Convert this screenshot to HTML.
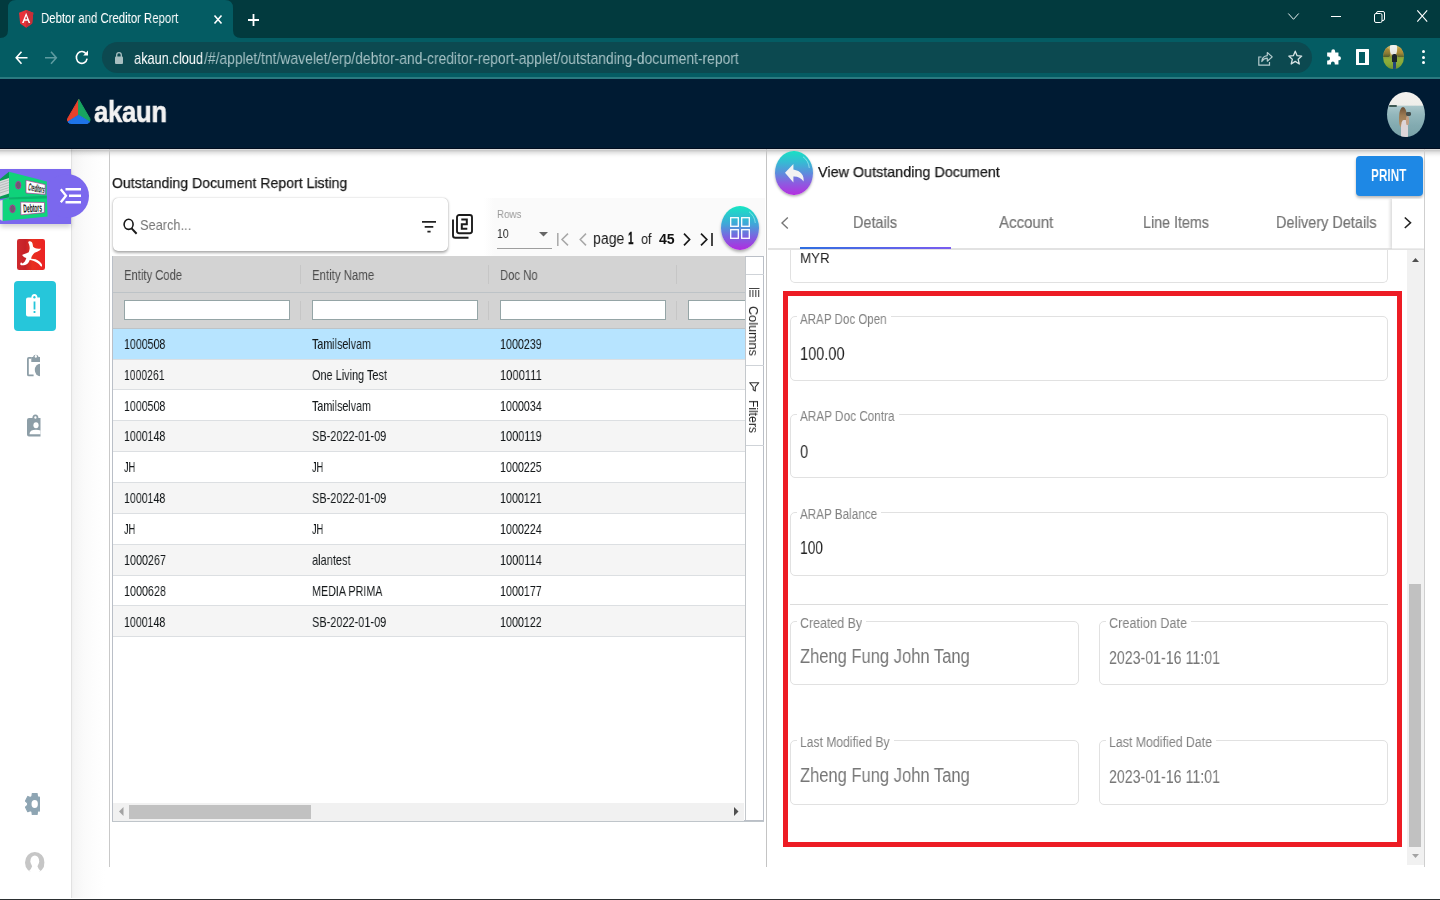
<!DOCTYPE html>
<html lang="en"><head><meta charset="utf-8"><title>Debtor and Creditor Report</title><style>
*{margin:0;padding:0;box-sizing:border-box}
html,body{width:1440px;height:900px;overflow:hidden;background:#fff}
body{position:relative;font-family:"Liberation Sans",sans-serif;}
.t{position:absolute;white-space:nowrap;line-height:1;transform-origin:0 0;display:block;will-change:transform}
.b{position:absolute;display:block}
svg{position:absolute;overflow:visible}
</style></head>
<body>
<div class="b" style="left:0px;top:0px;width:1440.00px;height:38.00px;background:#023a3e"></div>
<div class="b" style="left:0px;top:38px;width:1440.00px;height:40.00px;background:#045c63"></div>
<div class="b" style="left:0px;top:77px;width:1440.00px;height:1.50px;background:#2a7a80"></div>
<svg style="left:0;top:0" width="250" height="38"><path d="M0 38 Q8 38 8 30 L8 8 Q8 0 16 0 L225 0 Q233 0 233 8 L233 30 Q233 38 241 38 Z" fill="#045c63"/></svg>
<svg style="left:19px;top:9.7px" width="14.3" height="17.7" viewBox="0 0 15 19" preserveAspectRatio="none"><path d="M7.5 0 L15 3 L13.8 14.5 L7.5 19 L1.2 14.5 L0 3 Z" fill="#e8323a"/><path d="M7.5 0 L15 3 L13.8 14.5 L7.5 19 Z" fill="#c62f38"/><path d="M7.5 3 L3.2 14 L4.9 14 L5.8 11.5 L9.2 11.5 L10.1 14 L11.8 14 Z M7.5 6.5 L8.7 10 L6.3 10 Z" fill="#fff" fill-rule="evenodd"/></svg>
<span class="t" style="left:40.60px;top:11.30px;font-size:14.97px;color:#fff;transform:scaleX(0.7599);">Debtor and Creditor Report</span>
<svg style="left:214px;top:14.5px" width="8" height="9" viewBox="0 0 8 9"><path d="M0.5 0.5 L7.5 8.5 M7.5 0.5 L0.5 8.5" stroke="#fff" stroke-width="1.6" fill="none"/></svg>
<svg style="left:248px;top:13.5px" width="11" height="12" viewBox="0 0 11 12"><path d="M5.5 0 V12 M0 6 H11" stroke="#fff" stroke-width="1.8" fill="none"/></svg>
<svg style="left:1288px;top:13px" width="11" height="7" viewBox="0 0 11 7"><path d="M0.3 0.5 L5.5 6.3 L10.7 0.5" stroke="#e8f0f0" stroke-width="1" fill="none"/></svg>
<div class="b" style="left:1331px;top:16px;width:10.00px;height:1.20px;background:#fff"></div>
<svg style="left:1373.5px;top:10.5px" width="11" height="12" viewBox="0 0 11 12"><rect x="0.5" y="2.5" width="7.5" height="9" rx="1.5" stroke="#fff" stroke-width="1" fill="none"/><path d="M2.5 2.5 V2 Q2.5 0.5 4 0.5 H9 Q10.5 0.5 10.5 2 V8 Q10.5 9.5 9 9.5 H8" stroke="#fff" stroke-width="1" fill="none"/></svg>
<svg style="left:1417px;top:10.3px" width="10.5" height="12" viewBox="0 0 10.5 12"><path d="M0.3 0.3 L10.2 11.7 M10.2 0.3 L0.3 11.7" stroke="#fff" stroke-width="1.1" fill="none"/></svg>
<svg style="left:14.5px;top:50.5px" width="12.5" height="13.5" viewBox="0 0 12.5 13.5"><path d="M12.5 6.75 H1.5 M6.5 0.8 L1.2 6.75 L6.5 12.7" stroke="#fff" stroke-width="1.6" fill="none"/></svg>
<svg style="left:44.5px;top:50.5px" width="12.5" height="13.5" viewBox="0 0 12.5 13.5"><path d="M0 6.75 H11 M6 0.8 L11.3 6.75 L6 12.7" stroke="#5e9ba0" stroke-width="1.6" fill="none"/></svg>
<svg style="left:74.5px;top:50px" width="13.5" height="14.5" viewBox="0 0 13.5 14.5"><path d="M11.3 4.2 A5.4 5.9 0 1 0 12.1 8.6" stroke="#fff" stroke-width="1.6" fill="none"/><path d="M13 0.6 V5.6 H8.2 Z" fill="#fff"/></svg>
<div class="b" style="left:102px;top:42px;width:1210.00px;height:31.00px;background:#0c4950;border-radius:15.5px"></div>
<svg style="left:114.5px;top:52px" width="8" height="12" viewBox="0 0 8 12"><rect x="0" y="4.6" width="8" height="7.4" rx="1" fill="#a9bfc1"/><path d="M1.7 5 V3 A2.3 2.4 0 0 1 6.3 3 V5" stroke="#a9bfc1" stroke-width="1.3" fill="none"/></svg>
<span class="t" style="left:133.80px;top:49.80px;font-size:16.20px;color:#fff;transform:scaleX(0.7918);">akaun.cloud</span>
<span class="t" style="left:203.60px;top:49.80px;font-size:16.20px;color:#a5c1c4;transform:scaleX(0.8575);">/#/applet/tnt/wavelet/erp/debtor-and-creditor-report-applet/outstanding-document-report</span>
<svg style="left:1258px;top:50.5px" width="15" height="15" viewBox="0 0 15 15"><path d="M3.5 6 H0.8 V14.2 H11.5 V11" stroke="#b5cbcd" stroke-width="1.2" fill="none"/><path d="M3.8 10.5 Q4.2 5.2 9.3 4.6 V1.5 L14.2 5.9 L9.3 10.2 V7.2 Q5.8 7.2 3.8 10.5 Z" stroke="#b5cbcd" stroke-width="1.2" fill="none" stroke-linejoin="round"/></svg>
<svg style="left:1288px;top:50px" width="14.5" height="15" viewBox="0 0 14.5 15"><path d="M7.25 1.2 L9.1 5.7 L13.7 6.1 L10.2 9.3 L11.3 14 L7.25 11.4 L3.2 14 L4.3 9.3 L0.8 6.1 L5.4 5.7 Z" stroke="#d7e4e5" stroke-width="1.3" fill="none" stroke-linejoin="round"/></svg>
<svg style="left:1325.6px;top:49.2px" width="14.8" height="16" viewBox="0 0 14.5 16"><path d="M5.2 2.3 A1.9 2 0 0 1 9 2.3 V3.6 H12.3 V7.3 H13 A1.8 2 0 0 1 13 11.3 H12.3 V15.6 H8.6 V14.6 A1.9 2 0 0 0 4.8 14.6 V15.6 H1 V11.6 H2 A1.9 2 0 0 0 2 7.6 H1 V3.6 H5.2 Z" fill="#fff"/></svg>
<div class="b" style="left:1356.2px;top:49.4px;width:13.20px;height:15.60px;background:#fff;border-radius:0.5px"></div>
<div class="b" style="left:1358.5px;top:52px;width:6.40px;height:10.60px;background:#045c63"></div>
<div class="b" style="left:1383px;top:44.8px;width:20.5px;height:24.5px;border-radius:50%;overflow:hidden;background:linear-gradient(180deg,#c9b56a 0%,#b9a052 40%,#8a9a3c 49%,#8fae3c 60%,#86a838 80%,#6f9230 100%)"><div class="b" style="left:6.5px;top:0;width:7.5px;height:10.5px;background:linear-gradient(180deg,#f4f4f2,#e6e6e0);border-radius:0 0 45% 45%"></div><div class="b" style="left:0;top:3px;width:7px;height:9px;background:linear-gradient(180deg,#b08f3a,#8c7a34 60%,#4f5a2c);border-radius:30% 50% 20% 0"></div><div class="b" style="left:13.5px;top:2.5px;width:7px;height:9.5px;background:linear-gradient(180deg,#c89c3c,#a88a38 60%,#5a6430);border-radius:50% 30% 0 20%"></div><div class="b" style="left:9.2px;top:9.2px;width:4.7px;height:8.2px;background:#1b232d;border-radius:2px 2px 0.5px 0.5px"></div><div class="b" style="left:9.9px;top:17px;width:3.3px;height:7.5px;background:#21457a"></div></div>
<div class="b" style="left:1421.5px;top:50.1px;width:3.20px;height:3.20px;background:#fff;border-radius:50%"></div>
<div class="b" style="left:1421.5px;top:55.699999999999996px;width:3.20px;height:3.20px;background:#fff;border-radius:50%"></div>
<div class="b" style="left:1421.5px;top:61.199999999999996px;width:3.20px;height:3.20px;background:#fff;border-radius:50%"></div>
<div class="b" style="left:0px;top:78.5px;width:1440.00px;height:70.10px;background:#001b33"></div>
<div class="b" style="left:0px;top:147.7px;width:1440.00px;height:0.90px;background:#000d1f"></div>
<svg style="left:67px;top:99px" width="23.5" height="25" viewBox="0 0 23.5 25"><path d="M11.75 0.5 L0.7 19.5 Q0 21 1 22.5 L11.5 16.2 Z" fill="#e8412b" stroke="#e8412b" stroke-width="1" stroke-linejoin="round"/><path d="M11.75 0.5 L22.8 19.5 Q23.5 21 22.5 22.5 L11.5 16.2 Z" fill="#18a560" stroke="#18a560" stroke-width="1" stroke-linejoin="round"/><path d="M11.5 16.2 L1 22.8 Q2 24.5 3.5 24.5 H20 Q21.5 24.5 22.5 22.8 Z" fill="#1e74e8" stroke="#1e74e8" stroke-width="1" stroke-linejoin="round"/></svg>
<span class="t" style="left:94.30px;top:97.30px;font-size:29.34px;color:#f2f2f2;font-weight:700;transform:scaleX(0.8739);letter-spacing:-0.3px;-webkit-text-stroke:0.6px #f2f2f2;">akaun</span>
<div class="b" style="left:1387.3px;top:92px;width:38px;height:45.3px;border-radius:50%;overflow:hidden;background:linear-gradient(180deg,#f3f2ef 0%,#efeeea 29%,#a9c6ca 32%,#93b7bc 50%,#82aab0 75%,#7aa2a8 100%)"><div class="b" style="left:1.5px;top:13.2px;width:8.5px;height:1.7px;background:#3f5a55;border-radius:1px"></div><div class="b" style="left:11.4px;top:14.7px;width:8px;height:21px;background:linear-gradient(180deg,#6b4f35,#9c7a52 40%,#b8956b);border-radius:50% 50% 35% 35%"></div><div class="b" style="left:13.9px;top:27.5px;width:6.4px;height:19px;background:#ddd5d8;border-radius:40% 40% 10% 10%"></div><div class="b" style="left:18.6px;top:19.6px;width:5px;height:4.6px;background:#46504e;border-radius:30%"></div><div class="b" style="left:18.4px;top:23.6px;width:3.2px;height:9px;background:#c4a085;border-radius:40%"></div></div>
<div class="b" style="left:71px;top:148.6px;width:38.00px;height:749.40px;background:linear-gradient(90deg,#efefef 0,#f5f5f5 3px,#fafafa 12px,#fdfdfd 22px,#fff 34px)"></div>
<div class="b" style="left:0px;top:148.6px;width:71.30px;height:749.40px;background:#fff"></div>
<div class="b" style="left:71.3px;top:148.6px;width:0.90px;height:749.40px;background:#e2e2e2"></div>
<div class="b" style="left:0px;top:148.6px;width:1440.00px;height:9.40px;background:linear-gradient(180deg,rgba(0,0,0,.06) 0,rgba(0,0,0,.23) 12%,rgba(0,0,0,.1) 40%,rgba(0,0,0,.02) 75%,rgba(0,0,0,0))"></div>
<div class="b" style="left:0px;top:169.2px;width:71.00px;height:54.50px;background:#7b68ee;box-shadow:0 3px 5px rgba(0,0,0,.18)"></div>
<div class="b" style="left:45px;top:174px;width:44.00px;height:44.00px;background:#7b68ee;border-radius:22px"></div>
<svg style="left:0;top:165px" width="96" height="63" viewBox="0 165 96 63"><path d="M9 171.7 L0 179 V199 L9 197.6 Z" fill="#079a55"/><path d="M0 181 L9 178 V193.5 L0 196.5 Z" fill="#d9dcdc"/><path d="M0 183 L9 180 M0 185.5 L9 182.5 M0 188 L9 185 M0 190.5 L9 187.5 M0 193 L9 190" stroke="#a9adad" stroke-width="0.7"/><path d="M9 171.7 L46.9 181.5 L46.6 195.8 L9 197.6 Z" fill="#0fd27a"/><path d="M2.5 200 L9 197.4 L46.9 195.6 L47.6 216.5 L2.5 221 Z" fill="#10d57c"/><path d="M9 197.6 L46.7 195.8 L46.8 198.5 L9 199.5 Z" fill="#0ab568"/><path d="M0 200.5 L2.5 200 V221 L0 219.5 Z" fill="#e3e3e3"/><path d="M26 180.3 L45.2 184.6 V194.4 L26 193 Z" fill="#fff" stroke="#a63a93" stroke-width="0.7" stroke-linejoin="round"/><path d="M20.7 202.1 L44.5 202.5 L44.3 212.6 L20.9 214.9 Z" fill="#fff" stroke="#a63a93" stroke-width="0.7" stroke-linejoin="round"/><ellipse cx="18.3" cy="185.2" rx="2.6" ry="3.8" fill="#6d5a70" stroke="#b1389c" stroke-width="0.9"/><ellipse cx="12.5" cy="208.8" rx="2.7" ry="3.9" fill="#6d5a70" stroke="#b1389c" stroke-width="0.9"/><text font-family="Liberation Sans, sans-serif" font-size="10.5" font-weight="700" fill="#111" transform="translate(27.8 190.2) rotate(11.5) scale(0.355 1)">Creditors</text><text font-family="Liberation Sans, sans-serif" font-size="11.5" font-weight="700" fill="#111" transform="translate(23.6 212.6) rotate(-3.5) scale(0.43 1)">Debtors</text></svg>
<svg style="left:0;top:165px" width="96" height="63" viewBox="0 165 96 63"><path d="M60.8 189.2 L66 195.7 L60.8 202.2" stroke="#fff" stroke-width="2.3" fill="none"/><path d="M65.5 189.3 H81 M69 195.7 H81 M65.5 202.2 H81" stroke="#fff" stroke-width="2.4" fill="none"/></svg>
<svg style="left:16.8px;top:238.8px" width="28" height="31" viewBox="0 0 28 31"><defs><linearGradient id="rg" x1="0" x2="1"><stop offset="0" stop-color="#cf2a2e"/><stop offset="0.3" stop-color="#c62127"/><stop offset="0.55" stop-color="#e8301f"/><stop offset="1" stop-color="#ec2224"/></linearGradient></defs><rect width="28" height="31" rx="2.2" fill="url(#rg)"/><path d="M12 2.2 Q13.2 2 13.9 2.5 Q15.2 3.2 15.5 4.6 Q15.8 6.2 16.1 7.8 Q17.8 9.2 19.6 9.5 Q21.8 9.8 24 9.4 Q23.5 10.8 22.5 11.5 Q20.3 12.9 17.6 13.7 Q15.8 15.4 14.7 17.6 Q14.3 18.7 14.2 19.8 Q16.4 19.8 18.6 20.3 Q20.8 21 22.5 22.5 Q23.9 23.6 24.7 24.9 Q25.2 26.2 24.9 27.4 Q24.1 27.4 23.5 26.9 Q22.2 25.2 20.5 24 Q18.4 22.6 16.1 21.8 Q14.4 21.2 12.7 21 Q12.2 22.7 11.2 24 Q10.2 25.2 8.8 25.7 Q6.5 26.4 4.2 26.2 Q3.3 25.8 3.2 24.9 Q3.4 23.8 4.2 23.2 Q4.8 24.1 5.6 24.4 Q6.9 23.7 7.8 22.5 Q8.8 21 9.3 19.1 Q8.5 19 7.8 18.6 Q6.2 17.5 5.1 15.9 Q6 15.2 7.3 14.9 Q9.6 14.3 11.7 13.2 Q12.5 11.3 12.7 9.3 Q12.7 7.5 12.2 5.9 Q11.8 4.6 11.2 3.4 Q11.4 2.5 12 2.2 Z" fill="#fff"/></svg>
<div class="b" style="left:14px;top:281px;width:42.20px;height:50.00px;background:#26c6da;border-radius:4px"></div>
<svg style="left:26px;top:293.5px" width="14" height="22.5" viewBox="0 0 14 22.5"><path d="M2 3.6 H5.4 A3 3.6 0 0 1 11.4 3.6 H14 V22.5 H2 Q0 22.5 0 20.5 V5.6 Q0 3.6 2 3.6 Z" fill="#fff"/><ellipse cx="8.4" cy="3.2" rx="1.1" ry="1.3" fill="#26c6da"/><rect x="7.6" y="7.5" width="1.8" height="8" fill="#26c6da"/><rect x="7.6" y="17" width="1.8" height="2" fill="#26c6da"/></svg>
<svg style="left:27px;top:353.3px;overflow:hidden" width="13" height="23.5" viewBox="0 0 13 23.5"><path d="M4.4 4.9 H1.9 Q0.9 4.9 0.9 5.9 V21.4 Q0.9 22.4 1.9 22.4 H6.6" stroke="#8d9ea7" stroke-width="1.8" fill="none"/><path d="M4.3 9 V4 H6 A2.9 3.2 0 0 1 11.6 4 H13 V9 Z" fill="#8d9ea7"/><ellipse cx="8.8" cy="3.4" rx="1.1" ry="1.3" fill="#fff"/><ellipse cx="13.2" cy="17" rx="5.4" ry="6.3" fill="#8d9ea7"/></svg>
<svg style="left:26.6px;top:413.8px" width="13.5" height="22.5" viewBox="0 0 13.5 22.5"><path d="M2 4 H5.4 A3 3.6 0 0 1 11.4 4 H13.5 V22.5 H2 Q0 22.5 0 20.5 V6 Q0 4 2 4 Z" fill="#8d9ea7"/><ellipse cx="8.4" cy="3.5" rx="1.1" ry="1.3" fill="#fff"/><ellipse cx="9" cy="11.2" rx="2.6" ry="3" fill="#fff"/><path d="M2.5 20.2 Q2.5 15.8 9 15.8 Q11.5 15.8 13.5 16.5 V20.2 Z" fill="#fff"/></svg>
<svg style="left:25px;top:792.9px;overflow:hidden" width="15" height="22.2" viewBox="0 0 15 22.2"><path d="M6.92 3.61 L7.38 0.43 L12.02 0.43 L12.48 3.61 L13.98 4.60 L16.61 3.46 L18.93 8.07 L16.75 10.11 L16.75 12.09 L18.93 14.13 L16.61 18.74 L13.98 17.60 L12.48 18.59 L12.02 21.77 L7.38 21.77 L6.92 18.59 L5.42 17.60 L2.79 18.74 L0.47 14.13 L2.65 12.09 L2.65 10.11 L0.47 8.07 L2.79 3.46 L5.42 4.60 Z" fill="#8ea5b3" stroke="#8ea5b3" stroke-width="1.2" stroke-linejoin="round"/><ellipse cx="9.7" cy="11.1" rx="3.2" ry="4" fill="#fff"/></svg>
<svg style="left:24.7px;top:852px" width="19.6" height="20.5" viewBox="0 0 19.6 20.5"><defs><clipPath id="pc"><ellipse cx="9.8" cy="10.6" rx="9.8" ry="10.6"/></clipPath></defs><g clip-path="url(#pc)"><rect width="19.6" height="20.5" fill="#c6c6c6"/><ellipse cx="9.8" cy="9.2" rx="4.4" ry="5.8" fill="#fff"/><path d="M7.7 13 Q6.8 16.8 2.6 20.4 V23 H17 V20.4 Q12.8 16.8 11.9 13 Z" fill="#fff"/></g><rect x="3" y="19.9" width="13.6" height="1.5" fill="#fff"/></svg>
<div class="b" style="left:109.2px;top:148.6px;width:1.00px;height:718.40px;background:#c9c9c9"></div>
<span class="t" style="left:112.00px;top:174.50px;font-size:15.26px;color:#1a1a1a;transform:scaleX(0.9254);-webkit-text-stroke:0.25px #1a1a1a;">Outstanding Document Report Listing</span>
<div class="b" style="left:484px;top:198px;width:281.00px;height:58.00px;background:linear-gradient(90deg,#fff 0,#fafafa 10px)"></div>
<div class="b" style="left:112.5px;top:197.5px;width:335.00px;height:53.50px;background:#fff;border-radius:5px;box-shadow:0 1.5px 3px rgba(0,0,0,.32),0 0 1px rgba(0,0,0,.25)"></div>
<svg style="left:122.5px;top:217.5px" width="14.5" height="16.5" viewBox="0 0 14.5 16.5"><ellipse cx="5.6" cy="6.3" rx="4.5" ry="5.1" stroke="#1a1a1a" stroke-width="1.6" fill="none"/><path d="M8.6 10.4 L13.6 15.8" stroke="#1a1a1a" stroke-width="2"/></svg>
<span class="t" style="left:140.30px;top:218.30px;font-size:14.68px;color:#777;transform:scaleX(0.8719);">Search...</span>
<svg style="left:421.5px;top:220.5px" width="14" height="12" viewBox="0 0 14 12"><path d="M0 0.9 H14 M2.7 5.8 H11.3 M5.4 10.7 H8.6" stroke="#222" stroke-width="1.8"/></svg>
<svg style="left:452px;top:214.2px" width="21" height="24.8" viewBox="0 0 21 24.8"><path d="M1 5.5 V21.4 Q1 23.7 3.3 23.7 H16.5" stroke="#1c1c1c" stroke-width="1.9" fill="none"/><rect x="5" y="1" width="15" height="18.2" rx="2.2" stroke="#1c1c1c" stroke-width="1.9" fill="none"/><path d="M9.3 5.6 H14.8 V10.2 H9.8 V14.8 H15.3" stroke="#1c1c1c" stroke-width="2" fill="none"/></svg>
<span class="t" style="left:496.80px;top:209.00px;font-size:11.05px;color:#9a9a9a;transform:scaleX(0.8871);">Rows</span>
<span class="t" style="left:497.00px;top:227.40px;font-size:13.66px;color:#333;transform:scaleX(0.7649);">10</span>
<svg style="left:538.5px;top:232px" width="9" height="4.6" viewBox="0 0 9 4.6"><path d="M0 0 H9 L4.5 4.6 Z" fill="#666"/></svg>
<div class="b" style="left:497px;top:247.5px;width:54.70px;height:1.00px;background:#9e9e9e"></div>
<svg style="left:557px;top:232.5px" width="12" height="13" viewBox="0 0 12 13"><path d="M0.8 0 V13" stroke="#a8a8a8" stroke-width="1.5"/><path d="M11 0.6 L5 6.5 L11 12.4" stroke="#a8a8a8" stroke-width="1.5" fill="none"/></svg>
<svg style="left:579.3px;top:232.5px" width="8" height="13" viewBox="0 0 8 13"><path d="M7 0.6 L1.2 6.5 L7 12.4" stroke="#a8a8a8" stroke-width="1.5" fill="none"/></svg>
<span class="t" style="left:593.30px;top:230.10px;font-size:16.09px;color:#1a1a1a;transform:scaleX(0.8744);">page</span>
<span class="t" style="left:628.20px;top:231.30px;font-size:15.84px;color:#111;font-weight:700;transform:scaleX(0.6141);-webkit-text-stroke:0.35px #111;">1</span>
<span class="t" style="left:640.50px;top:231.10px;font-size:15.40px;color:#1a1a1a;transform:scaleX(0.8165);">of</span>
<span class="t" style="left:658.80px;top:232.10px;font-size:14.10px;color:#111;font-weight:700;transform:scaleX(0.9712);">45</span>
<svg style="left:682.5px;top:232.5px" width="8" height="13" viewBox="0 0 8 13"><path d="M1 0.6 L6.6 6.5 L1 12.4" stroke="#1a1a1a" stroke-width="1.7" fill="none"/></svg>
<svg style="left:699.5px;top:232.5px" width="13" height="13" viewBox="0 0 13 13"><path d="M1 0.6 L6.8 6.5 L1 12.4" stroke="#1a1a1a" stroke-width="1.7" fill="none"/><path d="M12 0 V13" stroke="#1a1a1a" stroke-width="1.6"/></svg>
<div class="b" style="left:721px;top:206px;width:38.00px;height:44.20px;border-radius:50%;background:linear-gradient(180deg,#16e6c3 0%,#3fa9d8 40%,#7c62e0 70%,#b22be0 100%);box-shadow:0 2px 3px rgba(0,0,0,.3)"></div>
<svg style="left:730px;top:217px" width="20" height="22" viewBox="0 0 20 22"><g stroke="#fff" stroke-width="1.3" fill="none"><rect x="0.7" y="0.7" width="7.6" height="8.6"/><rect x="11.7" y="0.7" width="7.6" height="8.6"/><rect x="0.7" y="12.7" width="7.6" height="8.6"/><rect x="11.7" y="12.7" width="7.6" height="8.6"/></g></svg>
<svg style="left:746px;top:210px" width="12" height="15" viewBox="0 0 12 15"><path d="M3 1.8 Q8.5 5.5 9.3 13" stroke="rgba(190,255,250,.6)" stroke-width="0.9" fill="none"/></svg>
<div class="b" style="left:112.3px;top:256px;width:652.20px;height:565.30px;border:1px solid #babfc7;background:#fff"></div>
<div class="b" style="left:113.3px;top:256px;width:631.70px;height:72.70px;background:#d3d3d3"></div>
<div class="b" style="left:113.3px;top:292.2px;width:631.70px;height:1.00px;background:#bdc3c7"></div>
<div class="b" style="left:113.3px;top:328px;width:631.70px;height:1.00px;background:#bdc3c7"></div>
<div class="b" style="left:299.5px;top:265px;width:1.00px;height:18.50px;background:#c6c6c6"></div>
<div class="b" style="left:299.5px;top:301px;width:1.00px;height:19.00px;background:#c6c6c6"></div>
<div class="b" style="left:487.8px;top:265px;width:1.00px;height:18.50px;background:#c6c6c6"></div>
<div class="b" style="left:487.8px;top:301px;width:1.00px;height:19.00px;background:#c6c6c6"></div>
<div class="b" style="left:675.5px;top:265px;width:1.00px;height:18.50px;background:#c6c6c6"></div>
<div class="b" style="left:675.5px;top:301px;width:1.00px;height:19.00px;background:#c6c6c6"></div>
<span class="t" style="left:124.30px;top:268.60px;font-size:13.95px;color:#4d4d4d;transform:scaleX(0.8068);">Entity Code</span>
<span class="t" style="left:312.30px;top:268.60px;font-size:13.95px;color:#4d4d4d;transform:scaleX(0.8187);">Entity Name</span>
<span class="t" style="left:500.30px;top:268.60px;font-size:13.95px;color:#4d4d4d;transform:scaleX(0.8101);">Doc No</span>
<div class="b" style="left:124px;top:300.3px;width:165.70px;height:19.30px;background:#fff;border:1px solid #95a5a6;"></div>
<div class="b" style="left:312px;top:300.3px;width:165.70px;height:19.30px;background:#fff;border:1px solid #95a5a6;"></div>
<div class="b" style="left:500px;top:300.3px;width:165.70px;height:19.30px;background:#fff;border:1px solid #95a5a6;"></div>
<div class="b" style="left:688px;top:300.3px;width:57.00px;height:19.30px;background:#fff;border:1px solid #95a5a6;border-right:none;"></div>
<div class="b" style="left:113.3px;top:328.8px;width:631.70px;height:30.85px;background:#b7e4ff;border-bottom:1px solid #dcdfe2"></div>
<span class="t" style="left:124.30px;top:336.90px;font-size:14.10px;color:#14181a;transform:scaleX(0.7521);">1000508</span>
<span class="t" style="left:311.90px;top:336.90px;font-size:14.10px;color:#14181a;transform:scaleX(0.7596);">Tamilselvam</span>
<span class="t" style="left:500.20px;top:336.90px;font-size:14.10px;color:#14181a;transform:scaleX(0.7612);">1000239</span>
<div class="b" style="left:113.3px;top:359.65000000000003px;width:631.70px;height:30.85px;background:#f5f5f5;border-bottom:1px solid #dcdfe2"></div>
<span class="t" style="left:124.30px;top:367.75px;font-size:14.10px;color:#14181a;transform:scaleX(0.7393);">1000261</span>
<span class="t" style="left:311.90px;top:367.75px;font-size:14.10px;color:#14181a;transform:scaleX(0.7737);">One Living Test</span>
<span class="t" style="left:500.20px;top:367.75px;font-size:14.10px;color:#14181a;transform:scaleX(0.7917);">1000111</span>
<div class="b" style="left:113.3px;top:390.5px;width:631.70px;height:30.85px;background:#fff;border-bottom:1px solid #dcdfe2"></div>
<span class="t" style="left:124.30px;top:398.60px;font-size:14.10px;color:#14181a;transform:scaleX(0.7521);">1000508</span>
<span class="t" style="left:311.90px;top:398.60px;font-size:14.10px;color:#14181a;transform:scaleX(0.7596);">Tamilselvam</span>
<span class="t" style="left:500.20px;top:398.60px;font-size:14.10px;color:#14181a;transform:scaleX(0.7612);">1000034</span>
<div class="b" style="left:113.3px;top:421.35px;width:631.70px;height:30.85px;background:#f5f5f5;border-bottom:1px solid #dcdfe2"></div>
<span class="t" style="left:124.30px;top:429.45px;font-size:14.10px;color:#14181a;transform:scaleX(0.7521);">1000148</span>
<span class="t" style="left:311.90px;top:429.45px;font-size:14.10px;color:#14181a;transform:scaleX(0.7767);">SB-2022-01-09</span>
<span class="t" style="left:500.20px;top:429.45px;font-size:14.10px;color:#14181a;transform:scaleX(0.7761);">1000119</span>
<div class="b" style="left:113.3px;top:452.20000000000005px;width:631.70px;height:30.85px;background:#fff;border-bottom:1px solid #dcdfe2"></div>
<span class="t" style="left:124.30px;top:460.30px;font-size:14.10px;color:#14181a;transform:scaleX(0.6511);">JH</span>
<span class="t" style="left:311.90px;top:460.30px;font-size:14.10px;color:#14181a;transform:scaleX(0.6511);">JH</span>
<span class="t" style="left:500.20px;top:460.30px;font-size:14.10px;color:#14181a;transform:scaleX(0.7612);">1000225</span>
<div class="b" style="left:113.3px;top:483.05px;width:631.70px;height:30.85px;background:#f5f5f5;border-bottom:1px solid #dcdfe2"></div>
<span class="t" style="left:124.30px;top:491.15px;font-size:14.10px;color:#14181a;transform:scaleX(0.7521);">1000148</span>
<span class="t" style="left:311.90px;top:491.15px;font-size:14.10px;color:#14181a;transform:scaleX(0.7767);">SB-2022-01-09</span>
<span class="t" style="left:500.20px;top:491.15px;font-size:14.10px;color:#14181a;transform:scaleX(0.7612);">1000121</span>
<div class="b" style="left:113.3px;top:513.9000000000001px;width:631.70px;height:30.85px;background:#fff;border-bottom:1px solid #dcdfe2"></div>
<span class="t" style="left:124.30px;top:522.00px;font-size:14.10px;color:#14181a;transform:scaleX(0.6511);">JH</span>
<span class="t" style="left:311.90px;top:522.00px;font-size:14.10px;color:#14181a;transform:scaleX(0.6511);">JH</span>
<span class="t" style="left:500.20px;top:522.00px;font-size:14.10px;color:#14181a;transform:scaleX(0.7612);">1000224</span>
<div class="b" style="left:113.3px;top:544.75px;width:631.70px;height:30.85px;background:#f5f5f5;border-bottom:1px solid #dcdfe2"></div>
<span class="t" style="left:124.30px;top:552.85px;font-size:14.10px;color:#14181a;transform:scaleX(0.7648);">1000267</span>
<span class="t" style="left:311.90px;top:552.85px;font-size:14.10px;color:#14181a;transform:scaleX(0.7811);">alantest</span>
<span class="t" style="left:500.20px;top:552.85px;font-size:14.10px;color:#14181a;transform:scaleX(0.7761);">1000114</span>
<div class="b" style="left:113.3px;top:575.6px;width:631.70px;height:30.85px;background:#fff;border-bottom:1px solid #dcdfe2"></div>
<span class="t" style="left:124.30px;top:583.70px;font-size:14.10px;color:#14181a;transform:scaleX(0.7648);">1000628</span>
<span class="t" style="left:311.90px;top:583.70px;font-size:14.10px;color:#14181a;transform:scaleX(0.7622);">MEDIA PRIMA</span>
<span class="t" style="left:500.20px;top:583.70px;font-size:14.10px;color:#14181a;transform:scaleX(0.7612);">1000177</span>
<div class="b" style="left:113.3px;top:606.45px;width:631.70px;height:30.85px;background:#f5f5f5;border-bottom:1px solid #dcdfe2"></div>
<span class="t" style="left:124.30px;top:614.55px;font-size:14.10px;color:#14181a;transform:scaleX(0.7521);">1000148</span>
<span class="t" style="left:311.90px;top:614.55px;font-size:14.10px;color:#14181a;transform:scaleX(0.7767);">SB-2022-01-09</span>
<span class="t" style="left:500.20px;top:614.55px;font-size:14.10px;color:#14181a;transform:scaleX(0.7612);">1000122</span>
<div class="b" style="left:113.3px;top:802.5px;width:631.20px;height:18.30px;background:#f1f1f1"></div>
<div class="b" style="left:112.3px;top:820.8px;width:652.20px;height:1.00px;background:#bfc5ca"></div>
<div class="b" style="left:128.7px;top:804.5px;width:182.80px;height:14.00px;background:#c1c1c1"></div>
<svg style="left:118.5px;top:807px" width="4.5" height="9" viewBox="0 0 4.5 9"><path d="M4.5 0 V9 L0 4.5 Z" fill="#a3a3a3"/></svg>
<svg style="left:734.2px;top:807px" width="4.5" height="9" viewBox="0 0 4.5 9"><path d="M0 0 V9 L4.5 4.5 Z" fill="#505050"/></svg>
<div class="b" style="left:744.6px;top:257px;width:18.90px;height:563.30px;background:#fff;border-left:1px solid #c4c8cc"></div>
<div class="b" style="left:745.5px;top:274px;width:18.00px;height:1.00px;background:#cfd3d8"></div>
<div class="b" style="left:745.5px;top:365.2px;width:18.00px;height:1.00px;background:#cfd3d8"></div>
<div class="b" style="left:745.5px;top:444.6px;width:18.00px;height:1.00px;background:#cfd3d8"></div>
<svg style="left:749px;top:288px" width="10.5" height="9" viewBox="0 0 10.5 9"><path d="M0 0.5 H10.5" stroke="#444" stroke-width="1"/><path d="M1 2 V9 M3.9 2 V9 M6.8 2 V9 M9.7 2 V9" stroke="#444" stroke-width="1.1"/></svg>
<svg style="left:749px;top:381.5px" width="10.5" height="10" viewBox="0 0 10.5 10"><path d="M0.7 0.7 H9.8 L6.3 5 V9 L4.2 7.7 V5 Z" stroke="#333" stroke-width="1.1" fill="none" stroke-linejoin="round"/></svg>
<span class="t" style="left:749.3px;top:305.50px;font-size:13.6px;color:#222;transform:rotate(90deg) scaleX(0.9319) translateY(-11.00px);">Columns</span>
<span class="t" style="left:749.3px;top:400.00px;font-size:13.6px;color:#222;transform:rotate(90deg) scaleX(0.8921) translateY(-11.00px);">Filters</span>
<div class="b" style="left:766.3px;top:148.6px;width:1.20px;height:718.40px;background:#c4c4c4"></div>
<div class="b" style="left:1424px;top:148.6px;width:1.00px;height:718.40px;background:#cfcfcf"></div>
<div class="b" style="left:775.2px;top:150.5px;width:37.80px;height:44.50px;border-radius:50%;background:linear-gradient(180deg,#19e0c4 0%,#35bcd3 25%,#5b8edc 50%,#8a5ee0 72%,#b52fe0 100%);box-shadow:0 1.5px 2.5px rgba(0,0,0,.3)"></div>
<svg style="left:800px;top:155px" width="12" height="15" viewBox="0 0 12 15"><path d="M3 1.8 Q8.5 5.5 9.3 13" stroke="rgba(190,255,250,.65)" stroke-width="0.9" fill="none"/></svg>
<svg style="left:784.7px;top:163.8px" width="19.3" height="18.4" viewBox="0 0 19.3 18.4"><path d="M8.4 0 L0 8.8 L8.4 18.4 V12.6 Q14.6 12.2 18.6 17.6 Q19.6 7.6 8.4 5.4 Z" fill="#f2f2f2"/></svg>
<span class="t" style="left:817.80px;top:164.90px;font-size:14.54px;color:#1a1a1a;transform:scaleX(0.9889);-webkit-text-stroke:0.25px #1a1a1a;">View Outstanding Document</span>
<div class="b" style="left:1356px;top:156px;width:66.60px;height:39.60px;background:#1e88e5;border-radius:4px;box-shadow:0 2px 3px rgba(0,0,0,.28)"></div>
<span class="t" style="left:1371.30px;top:168.00px;font-size:15.99px;color:#fff;font-weight:700;transform:scaleX(0.7359);">PRINT</span>
<svg style="left:781px;top:216.5px" width="7.5" height="12" viewBox="0 0 7.5 12"><path d="M6.8 0.5 L1 6 L6.8 11.5" stroke="#777" stroke-width="1.4" fill="none"/></svg>
<span class="t" style="left:852.80px;top:214.70px;font-size:15.99px;color:#757575;transform:scaleX(0.9049);-webkit-text-stroke:0.2px #757575;">Details</span>
<span class="t" style="left:998.50px;top:214.70px;font-size:15.99px;color:#757575;transform:scaleX(0.9395);-webkit-text-stroke:0.2px #757575;">Account</span>
<span class="t" style="left:1142.80px;top:214.70px;font-size:15.99px;color:#757575;transform:scaleX(0.8945);-webkit-text-stroke:0.2px #757575;">Line Items</span>
<span class="t" style="left:1276.00px;top:214.70px;font-size:15.99px;color:#757575;transform:scaleX(0.9060);-webkit-text-stroke:0.2px #757575;">Delivery Details</span>
<div class="b" style="left:768px;top:248.4px;width:656.00px;height:1.30px;background:#e2e2e2"></div>
<div class="b" style="left:800px;top:246.6px;width:150.50px;height:2.20px;background:linear-gradient(90deg,#2f6fe0,#7a5cf0)"></div>
<div class="b" style="left:1392px;top:199px;width:32.00px;height:49.50px;background:#fff;box-shadow:-2px 0 3px rgba(0,0,0,.14);clip-path:inset(0 0 0 -7px)"></div>
<svg style="left:1404px;top:216.8px" width="7.5" height="11.5" viewBox="0 0 7.5 11.5"><path d="M0.8 0.5 L6.5 5.75 L0.8 11" stroke="#222" stroke-width="1.6" fill="none"/></svg>
<div class="b" style="left:1407px;top:249.5px;width:16.50px;height:615.50px;background:#f1f1f1"></div>
<div class="b" style="left:1408.8px;top:583.5px;width:12.20px;height:263.10px;background:#c1c1c1"></div>
<svg style="left:1411.5px;top:258px" width="7" height="4" viewBox="0 0 7 4"><path d="M0 4 H7 L3.5 0 Z" fill="#505050"/></svg>
<svg style="left:1411.5px;top:853.5px" width="7" height="4" viewBox="0 0 7 4"><path d="M0 0 H7 L3.5 4 Z" fill="#a3a3a3"/></svg>
<div class="b" style="left:789.5px;top:249.5px;width:598.50px;height:33.80px;border:1px solid #e1e1e1;border-top:none;border-radius:0 0 5px 5px"></div>
<span class="t" style="left:800.30px;top:249.60px;font-size:15.41px;color:#222;transform:scaleX(0.8683);">MYR</span>
<div class="b" style="left:783px;top:291px;width:619.00px;height:556.00px;border:5px solid #ed1c24;border-left-width:5.2px"></div>
<div class="b" style="left:789.5px;top:316.4px;width:598.50px;height:64.60px;border:1px solid #e1e1e1;border-radius:5px"></div><div class="b" style="left:797.0px;top:315.4px;width:93.50px;height:3.00px;background:#fff"></div><span class="t" style="left:800.30px;top:312.80px;font-size:13.95px;color:#828282;transform:scaleX(0.8301);">ARAP Doc Open</span><span class="t" style="left:800.30px;top:345.00px;font-size:18.31px;color:#222;transform:scaleX(0.7976);">100.00</span>
<div class="b" style="left:789.5px;top:414px;width:598.50px;height:64.30px;border:1px solid #e1e1e1;border-radius:5px"></div><div class="b" style="left:797.0px;top:413px;width:101.50px;height:3.00px;background:#fff"></div><span class="t" style="left:800.30px;top:410.40px;font-size:13.95px;color:#828282;transform:scaleX(0.8436);">ARAP Doc Contra</span><span class="t" style="left:800.30px;top:442.60px;font-size:18.31px;color:#222;transform:scaleX(0.8067);">0</span>
<div class="b" style="left:789.5px;top:511.5px;width:598.50px;height:64.50px;border:1px solid #e1e1e1;border-radius:5px"></div><div class="b" style="left:797.0px;top:510.5px;width:84.00px;height:3.00px;background:#fff"></div><span class="t" style="left:800.30px;top:507.90px;font-size:13.95px;color:#828282;transform:scaleX(0.8389);">ARAP Balance</span><span class="t" style="left:800.30px;top:538.60px;font-size:18.31px;color:#222;transform:scaleX(0.7520);">100</span>
<div class="b" style="left:789.5px;top:603.7px;width:598.50px;height:1.00px;background:#dcdcdc"></div>
<div class="b" style="left:789.5px;top:621px;width:289.00px;height:63.60px;border:1px solid #e1e1e1;border-radius:5px"></div><div class="b" style="left:797.0px;top:620px;width:69.00px;height:3.00px;background:#fff"></div><span class="t" style="left:800.30px;top:617.40px;font-size:13.95px;color:#828282;transform:scaleX(0.8906);">Created By</span><span class="t" style="left:800.30px;top:646.60px;font-size:19.77px;color:#777;transform:scaleX(0.8363);">Zheng Fung John Tang</span>
<div class="b" style="left:1098.5px;top:621px;width:289.50px;height:63.60px;border:1px solid #e1e1e1;border-radius:5px"></div><div class="b" style="left:1106.0px;top:620px;width:85.00px;height:3.00px;background:#fff"></div><span class="t" style="left:1109.30px;top:617.40px;font-size:13.95px;color:#828282;transform:scaleX(0.9083);">Creation Date</span><span class="t" style="left:1109.30px;top:649.00px;font-size:18.90px;color:#777;transform:scaleX(0.7512);">2023-01-16 11:01</span>
<div class="b" style="left:789.5px;top:740px;width:289.00px;height:64.70px;border:1px solid #e1e1e1;border-radius:5px"></div><div class="b" style="left:797.0px;top:739px;width:96.50px;height:3.00px;background:#fff"></div><span class="t" style="left:800.30px;top:736.40px;font-size:13.95px;color:#828282;transform:scaleX(0.8693);">Last Modified By</span><span class="t" style="left:800.30px;top:765.60px;font-size:19.77px;color:#777;transform:scaleX(0.8363);">Zheng Fung John Tang</span>
<div class="b" style="left:1098.5px;top:740px;width:289.50px;height:64.70px;border:1px solid #e1e1e1;border-radius:5px"></div><div class="b" style="left:1106.0px;top:739px;width:110.00px;height:3.00px;background:#fff"></div><span class="t" style="left:1109.30px;top:736.40px;font-size:13.95px;color:#828282;transform:scaleX(0.8868);">Last Modified Date</span><span class="t" style="left:1109.30px;top:768.00px;font-size:18.90px;color:#777;transform:scaleX(0.7512);">2023-01-16 11:01</span>
<div class="b" style="left:0px;top:898.6px;width:1440.00px;height:1.40px;background:#2b2f31"></div>
</body></html>
